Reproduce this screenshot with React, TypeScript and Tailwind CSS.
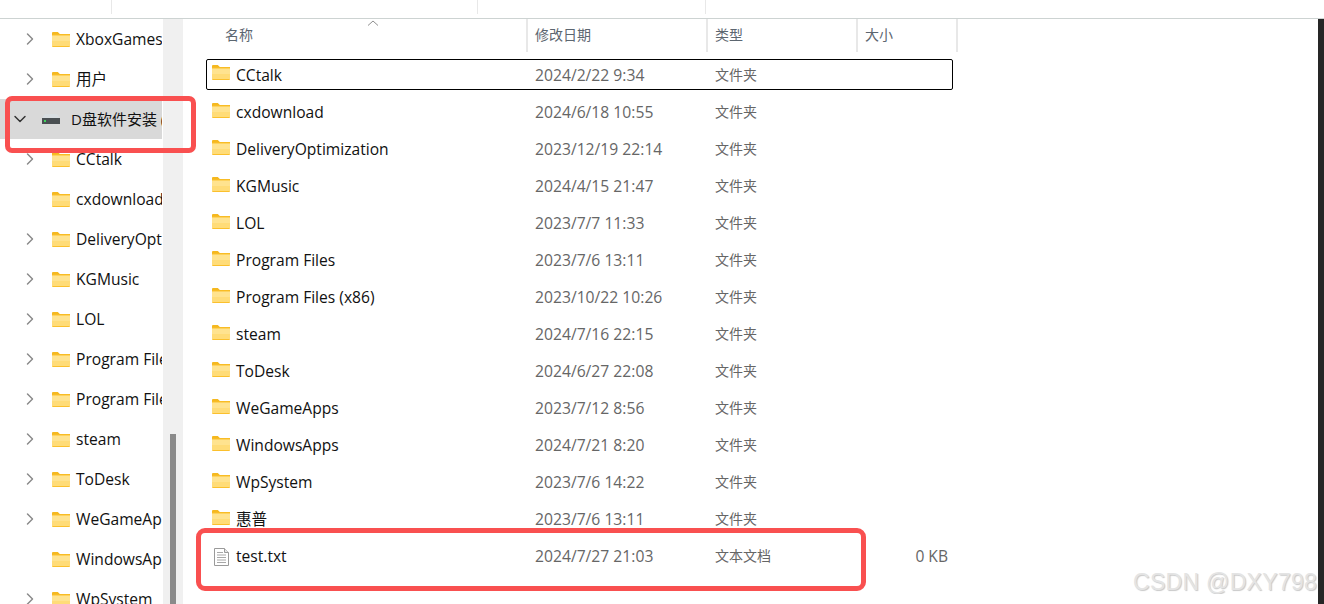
import { ChevronDown, ChevronRight } from "lucide-react"

const sidebarRows = [
  { name: "XboxGames", arrow: true },
  { name: "用户", arrow: true },
  { name: "D盘软件安装 (D:)", drive: true },
  { name: "CCtalk", arrow: true },
  { name: "cxdownload", arrow: false },
  { name: "DeliveryOptimization", arrow: true },
  { name: "KGMusic", arrow: true },
  { name: "LOL", arrow: true },
  { name: "Program Files", arrow: true },
  { name: "Program Files (x86)", arrow: true },
  { name: "steam", arrow: true },
  { name: "ToDesk", arrow: true },
  { name: "WeGameApps", arrow: true },
  { name: "WindowsApps", arrow: false },
  { name: "WpSystem", arrow: true },
]

const files = [
  { name: "CCtalk", date: "2024/2/22 9:34" },
  { name: "cxdownload", date: "2024/6/18 10:55" },
  { name: "DeliveryOptimization", date: "2023/12/19 22:14" },
  { name: "KGMusic", date: "2024/4/15 21:47" },
  { name: "LOL", date: "2023/7/7 11:33" },
  { name: "Program Files", date: "2023/7/6 13:11" },
  { name: "Program Files (x86)", date: "2023/10/22 10:26" },
  { name: "steam", date: "2024/7/16 22:15" },
  { name: "ToDesk", date: "2024/6/27 22:08" },
  { name: "WeGameApps", date: "2023/7/12 8:56" },
  { name: "WindowsApps", date: "2024/7/21 8:20" },
  { name: "WpSystem", date: "2023/7/6 14:22" },
  { name: "惠普", date: "2023/7/6 13:11" },
]

const font = "font-['Open_Sans','Noto_Sans_CJK_SC',sans-serif]"

function FolderIcon() {
  return (
    <svg width="18" height="15" viewBox="0 0 18 15" className="shrink-0">
      <path d="M0 1.2C0 .5.5 0 1.2 0h4.6l2 2H18v3H0z" fill="#f5b81f" />
      <rect x="0" y="2.5" width="18" height="12.5" rx="1" fill="#fbc02d" />
      <rect x="0" y="3.5" width="18" height="10.5" fill="#ffe38f" />
      <rect x="0" y="9" width="18" height="5" fill="#ffdc78" />
    </svg>
  )
}

function DriveIcon() {
  return (
    <svg width="18" height="10" viewBox="0 0 18 10" className="shrink-0">
      <path d="M3 0h12l3 4H0z" fill="#d8dde0" />
      <rect x="0" y="4" width="18" height="6" fill="#4a4f52" />
      <rect x="2" y="6" width="2" height="2" fill="#3fd45c" />
    </svg>
  )
}

function TextFileIcon() {
  return (
    <svg width="15" height="18" viewBox="0 0 15 18" className="shrink-0">
      <path d="M.5.5h10l4 4v13H.5z" fill="#fff" stroke="#9a9a9a" />
      <path d="M10.5.5v4h4" fill="#e6e6e6" stroke="#9a9a9a" />
      <path d="M3 4.5h6M3 7h9M3 9.5h9M3 12h9M3 14.5h9" stroke="#a8a8a8" />
    </svg>
  )
}

function SidebarRow({ row }: { row: (typeof sidebarRows)[number] }) {
  if (row.drive) {
    return (
      <div className="flex h-10 items-center bg-[#d9d9d9] pl-[10px] whitespace-nowrap">
        <ChevronDown className="h-5 w-5 shrink-0 text-[#333]" strokeWidth={1.75} />
        <div className="ml-[12px] mr-[11px] flex">
          <DriveIcon />
        </div>
        <span className="text-[15px] text-[#111]">{row.name}</span>
      </div>
    )
  }
  return (
    <div className="flex h-10 items-center pl-[20px] whitespace-nowrap">
      <div className="w-[32px] shrink-0">
        {row.arrow && <ChevronRight className="h-5 w-5 text-[#8a8a8a]" strokeWidth={1.75} />}
      </div>
      <FolderIcon />
      <span className="ml-1.5 mt-0.5 text-[15.6px] text-[#111]">{row.name}</span>
    </div>
  )
}

function HeaderCell({ label, width }: { label: string; width: string }) {
  return (
    <div className={`flex h-[33px] items-center border-r-2 border-[#e8e8e8] pb-0.5 pl-[7px] text-sm text-[#5c6670] ${width}`}>
      {label}
    </div>
  )
}

export default function App() {
  return (
    <div className={`relative flex h-[604px] w-[1324px] flex-col overflow-hidden bg-white ${font}`}>
      <div className="flex h-[19px] shrink-0 items-start border-b border-[#cdd3d2] pl-[111px]">
        <div className="h-[14px] w-px bg-[#e8e8e8]" />
        <div className="ml-[365px] h-[14px] w-px bg-[#e8e8e8]" />
        <div className="ml-[227px] h-[14px] w-px bg-[#e8e8e8]" />
      </div>

      <div className="flex min-h-0 flex-1">
        <div className="mr-px w-[162px] shrink-0 overflow-hidden">
          {sidebarRows.map((row) => (
            <SidebarRow key={row.name} row={row} />
          ))}
        </div>

        <div className="flex w-[20px] shrink-0 flex-col items-center bg-[#f0f0f0] pt-[415px]">
          <div className="w-1.5 flex-1 bg-[#8a8a8a]" />
        </div>

        <div className="relative min-w-0 flex-1 pl-[23px]">
          <svg width="12" height="6" viewBox="0 0 12 6" className="absolute left-[184px] top-px">
            <path d="M1 5.5 6 1l5 4.5" fill="none" stroke="#8f8f8f" />
          </svg>
          <div className="flex pl-[2px]">
            <div className="flex h-[33px] w-[320px] items-center border-r-2 border-[#e8e8e8] pb-0.5 pl-[17px] text-sm text-[#5c6670]">
              名称
            </div>
            <HeaderCell label="修改日期" width="w-[180px]" />
            <HeaderCell label="类型" width="w-[150px]" />
            <HeaderCell label="大小" width="w-[100px]" />
          </div>

          <div className="mt-[7px]">
            {files.map((file, i) => (
              <div
                key={file.name}
                className={`flex w-[747px] items-center ${i === 0 ? "mb-[4px] h-[31px] rounded-[2px] border border-black" : "h-[37px]"}`}
              >
                <div className={`flex items-center ${i === 0 ? "w-[328px] pl-[5px]" : "w-[329px] pl-1.5"}`}>
                  <div className="-mt-1 flex">
                    <FolderIcon />
                  </div>
                  <span className={`ml-1.5 text-[15.6px] text-[#111] ${i === 0 ? "mt-0.5" : ""}`}>{file.name}</span>
                </div>
                <span className={`w-[180px] text-[15.7px] text-[#666] ${i === 0 ? "mt-0.5" : ""}`}>{file.date}</span>
                <span className={`text-sm text-[#666] ${i === 0 ? "" : "mb-0.5"}`}>文件夹</span>
              </div>
            ))}
            <div className="flex h-[37px] w-[747px] items-center pl-2">
              <TextFileIcon />
              <span className="ml-[7px] w-[299px] text-[15.6px] text-[#111]">test.txt</span>
              <span className="w-[180px] text-[15.7px] text-[#666]">2024/7/27 21:03</span>
              <span className="mb-0.5 w-[150px] text-sm text-[#666]">文本文档</span>
              <span className="w-[83px] text-right text-[15.6px] text-[#666]">0 KB</span>
            </div>
          </div>
        </div>

        <div className="w-1.5 shrink-0 bg-[#262626]" />
      </div>

      {/* red annotations drawn over the screenshot */}
      <div className="absolute left-[5px] top-[96px] h-[57px] w-[191px] rounded-[7px] border-[5px] border-[#f95050]" />
      <div className="absolute left-[196px] top-[528px] h-[63px] w-[670px] rounded-[9px] border-[5px] border-[#f95050]" />

      <div className="absolute left-[1133px] top-[571px] w-[185px] overflow-hidden font-['Liberation_Sans',sans-serif] text-[23px] leading-none tracking-[0.3px] whitespace-nowrap text-[#e4e4e4] [text-shadow:1px_1px_1px_#c8c8c8]">
        CSDN @DXY798
      </div>
    </div>
  )
}
